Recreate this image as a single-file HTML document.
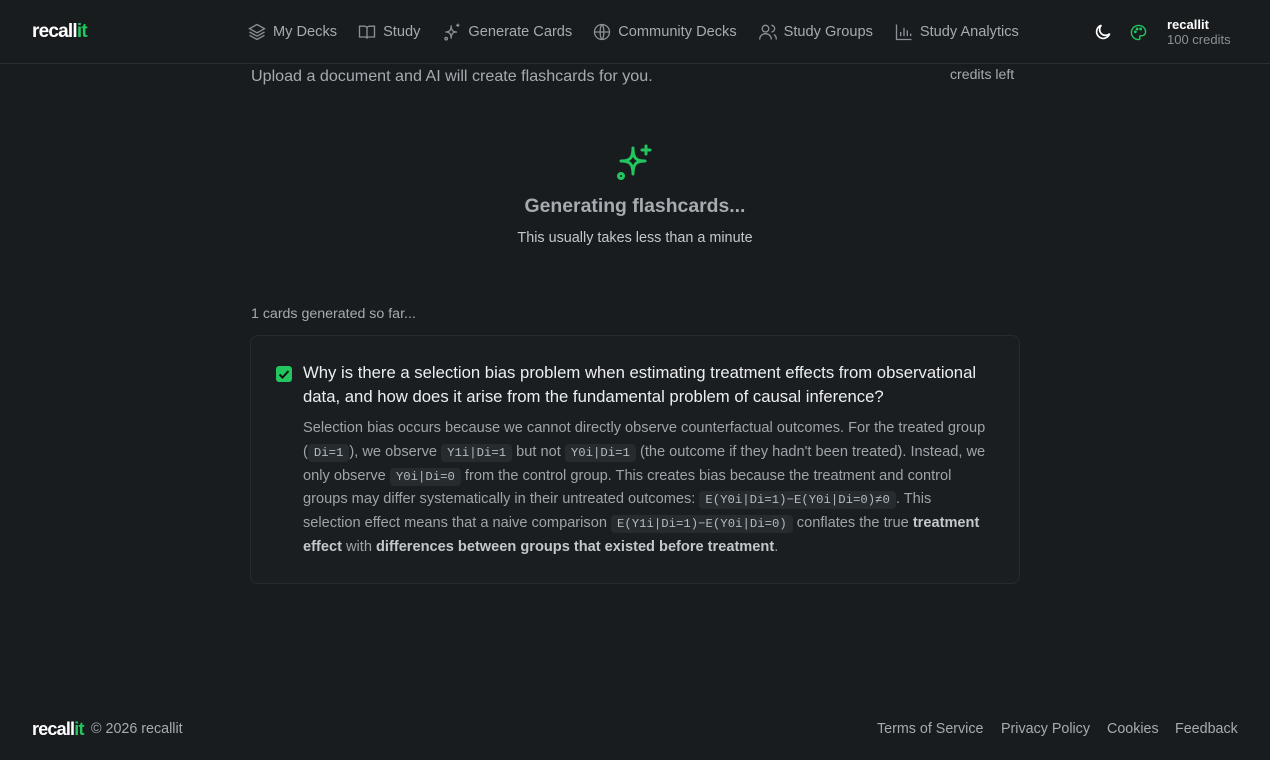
<!DOCTYPE html>
<html><head><meta charset="utf-8"><style>
*{margin:0;padding:0;box-sizing:border-box}
body{width:1270px;height:760px;background:#181c1f;font-family:"Liberation Sans",sans-serif;color:#e6e8ea;position:relative;overflow:hidden}
.hdr{position:absolute;left:0;top:0;width:1270px;height:64px;border-bottom:1px solid #2a2f33}
.logo{position:absolute;font-weight:bold;font-size:19px;letter-spacing:-0.8px;color:#fff}
.logo span{color:#22c55e}
.nav{position:absolute;top:22px;display:flex;align-items:center;font-size:14.6px;color:#a5abb0}
.nav svg{margin-right:6px}
.abs{position:absolute}
.card{position:absolute;left:250px;top:335px;width:770px;height:249px;border:1px solid #262b2f;border-radius:8px;background:#1a1e21}
code{font-family:"Liberation Mono",monospace;font-size:12.3px;line-height:1;background:#262b2f;border-radius:4px;padding:2px 6px;color:#b5babe}
.ans{position:absolute;left:52px;top:81px;width:688px;font-size:14.6px;line-height:23.8px;color:#9ea4a9}
.ans b{color:#c4c8cb}
.foot{position:absolute;top:721px;font-size:14.3px;color:#a5abb0}
</style></head><body>
<div class="hdr">
<div class="logo" style="left:32px;top:21px">recall<span>it</span></div>
<div class="nav" style="left:247px">
<svg width="20" height="20" viewBox="0 0 24 24" fill="none" stroke="#8a9095" stroke-width="1.6"><path d="M12 3 3 8l9 5 9-5z"/><path d="M3 12l9 5 9-5"/><path d="M3 16l9 5 9-5"/></svg>My Decks
<svg style="margin-left:20px" width="20" height="20" viewBox="0 0 24 24" fill="none" stroke="#8a9095" stroke-width="1.6"><path d="M3 5h6a3 3 0 0 1 3 3v12a2 2 0 0 0-2-2H3zM21 5h-6a3 3 0 0 0-3 3v12a2 2 0 0 1 2-2h7z"/></svg>Study
<svg style="margin-left:22px" width="20" height="20" viewBox="0 0 24 24" fill="none" stroke="#8a9095" stroke-width="1.6"><path d="M11 4c0 6 2 8 7 8-5 0-7 2-7 8 0-6-2-8-7-8 5 0 7-2 7-8z"/><path d="M19 2v4M17 4h4"/><circle cx="5" cy="20" r="1.5"/></svg>Generate Cards
<svg style="margin-left:20px" width="20" height="20" viewBox="0 0 24 24" fill="none" stroke="#8a9095" stroke-width="1.6"><circle cx="12" cy="12" r="9"/><path d="M3 12h18M12 3c3 3 3 15 0 18M12 3c-3 3-3 15 0 18"/></svg>Community Decks
<svg style="margin-left:21px" width="20" height="20" viewBox="0 0 24 24" fill="none" stroke="#8a9095" stroke-width="1.6"><circle cx="9" cy="8" r="4"/><path d="M2 21c0-4 3-7 7-7s7 3 7 7M16 4a4 4 0 0 1 0 8M19 15c2 1 3 3 3 6"/></svg>Study Groups
<svg style="margin-left:21px" width="20" height="20" viewBox="0 0 24 24" fill="none" stroke="#8a9095" stroke-width="1.6"><path d="M3 3v18h18M8 17v-5M12 17V7M16 17v-7M20 17v-3"/></svg>Study Analytics
</div>
<svg class="abs" style="left:1093px;top:22px" width="20" height="20" viewBox="0 0 24 24" fill="none" stroke="#fff" stroke-width="2"><path d="M20 14A8 8 0 1 1 10 4a6 6 0 0 0 10 10z"/></svg>
<svg class="abs" style="left:1130px;top:24px" width="17" height="17" viewBox="0 0 24 24" fill="none" stroke="#22c55e" stroke-width="2"><path d="M12 2a10 10 0 0 0 0 20c1.5 0 2-1 2-2 0-1.5-1-2 0-3s3 0 5-1c2-1 3-3 3-5 0-5-4.5-9-10-9z"/><circle cx="7.5" cy="11" r="1"/><circle cx="10" cy="7" r="1"/><circle cx="15" cy="7" r="1"/></svg>
<div class="abs" style="left:1167px;top:17px;font-size:13px;color:#fff;font-weight:bold">recallit</div>
<div class="abs" style="left:1167px;top:32px;font-size:13px;color:#8a9095">100 credits</div>
</div>
<div class="abs" style="left:251px;top:67px;font-size:16.1px;color:#a5abb0">Upload a document and AI will create flashcards for you.</div>
<div class="abs" style="left:950px;top:66px;font-size:14.1px;color:#a5abb0">credits left</div>
<svg class="abs" style="left:615px;top:144px" width="40" height="40" viewBox="0 0 40 40" fill="none" stroke="#22c55e" stroke-width="3" stroke-linecap="round" stroke-linejoin="round"><path d="M18 4c0 10 3 13 12 13-9 0-12 3-12 13 0-10-3-13-12-13 9 0 12-3 12-13z"/><path d="M31 2v8M27 6h8"/><circle cx="6" cy="32" r="2.5"/></svg>
<div class="abs" style="left:0;width:1270px;text-align:center;top:195px;font-size:19.4px;font-weight:bold;color:#a5abb0">Generating flashcards...</div>
<div class="abs" style="left:0;width:1270px;text-align:center;top:230px;font-size:14.4px;color:#c4c8cb">This usually takes less than a minute</div>
<div class="abs" style="left:251px;top:306px;font-size:14.2px;color:#a5abb0">1 cards generated so far...</div>
<div class="card">
<div class="abs" style="left:25px;top:30px;width:16px;height:16px;background:#22c55e;border-radius:3px"><svg width="16" height="16" viewBox="0 0 16 16" fill="none" stroke="#111" stroke-width="2"><path d="M3.5 8.5l3 3 6-6.5"/></svg></div>
<div class="abs" style="left:52px;top:25px;width:705px;font-size:16.7px;line-height:24px;color:#eceef0">Why is there a selection bias problem when estimating treatment effects from observational data, and how does it arise from the fundamental problem of causal inference?</div>
<div class="ans">Selection bias occurs because we cannot directly observe counterfactual outcomes. For the treated group (<code>Di=1</code>), we observe <code>Y1i|Di=1</code> but not <code>Y0i|Di=1</code> (the outcome if they hadn't been treated). Instead, we only observe <code>Y0i|Di=0</code> from the control group. This creates bias because the treatment and control groups may differ systematically in their untreated outcomes: <code>E(Y0i|Di=1)−E(Y0i|Di=0)≠0</code>. This selection effect means that a naive comparison <code>E(Y1i|Di=1)−E(Y0i|Di=0)</code> conflates the true <b>treatment effect</b> with <b>differences between groups that existed before treatment</b>.</div>
</div>
<div class="logo" style="left:32px;top:719px;font-size:18px">recall<span>it</span></div>
<div class="foot" style="left:91px;color:#a5abb0">© 2026 recallit</div>
<div class="foot" style="left:877px">Terms of Service</div>
<div class="foot" style="left:1001px">Privacy Policy</div>
<div class="foot" style="left:1107px">Cookies</div>
<div class="foot" style="left:1175px">Feedback</div>
</body></html>
